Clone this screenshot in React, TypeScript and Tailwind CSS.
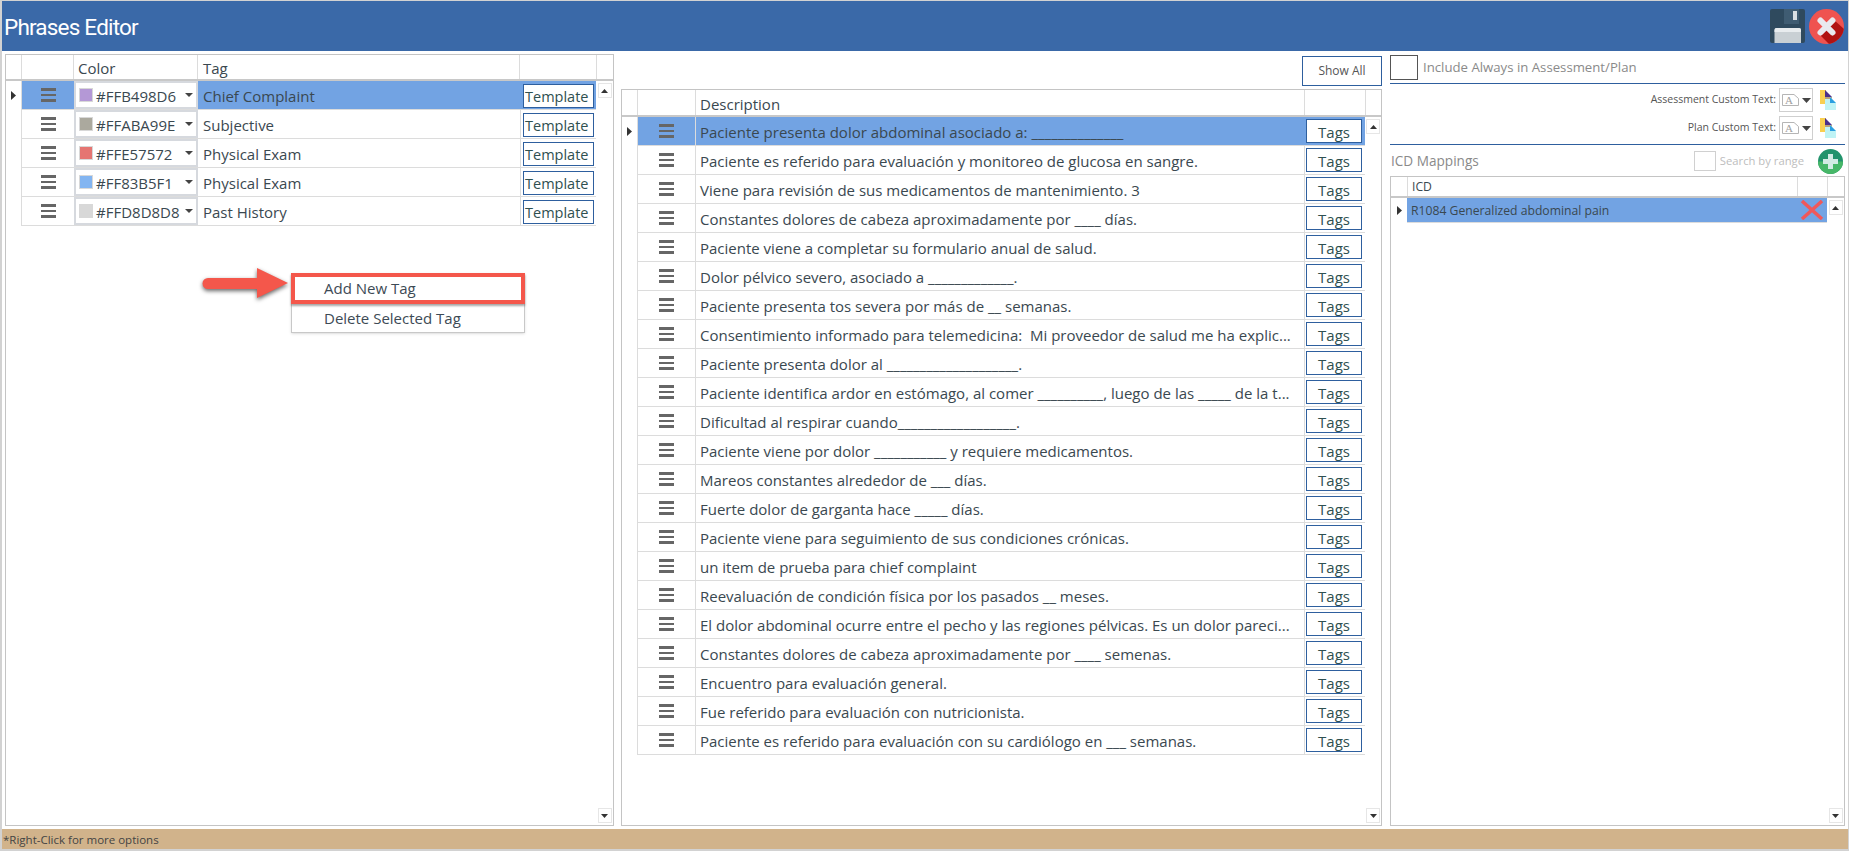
const tags = [
  { color: '#FFB498D6', swatch: '#b498d6', name: 'Chief Complaint' },
  { color: '#FFABA99E', swatch: '#aba99e', name: 'Subjective' },
  { color: '#FFE57572', swatch: '#e57572', name: 'Physical Exam' },
  { color: '#FF83B5F1', swatch: '#83b5f1', name: 'Physical Exam' },
  { color: '#FFD8D8D8', swatch: '#d8d8d8', name: 'Past History' }
]

const phrases = [
  'Paciente presenta dolor abdominal asociado a: ______________',
  'Paciente es referido para evaluación y monitoreo de glucosa en sangre.',
  'Viene para revisión de sus medicamentos de mantenimiento. 3',
  'Constantes dolores de cabeza aproximadamente por ____ días.',
  'Paciente viene a completar su formulario anual de salud.',
  'Dolor pélvico severo, asociado a _____________.',
  'Paciente presenta tos severa por más de __ semanas.',
  'Consentimiento informado para telemedicina:  Mi proveedor de salud me ha explic...',
  'Paciente presenta dolor al ____________________.',
  'Paciente identifica ardor en estómago, al comer __________, luego de las _____ de la t...',
  'Dificultad al respirar cuando__________________.',
  'Paciente viene por dolor ___________ y requiere medicamentos.',
  'Mareos constantes alrededor de ___ días.',
  'Fuerte dolor de garganta hace _____ días.',
  'Paciente viene para seguimiento de sus condiciones crónicas.',
  'un item de prueba para chief complaint',
  'Reevaluación de condición física por los pasados __ meses.',
  'El dolor abdominal ocurre entre el pecho y las regiones pélvicas. Es un dolor pareci...',
  'Constantes dolores de cabeza aproximadamente por ____ semenas.',
  'Encuentro para evaluación general.',
  'Fue referido para evaluación con nutricionista.',
  'Paciente es referido para evaluación con su cardiólogo en ___ semanas.'
]

function Caret() {
  return (
    <svg width="5" height="9" viewBox="0 0 5 9">
      <polygon points="0,0 5,4.5 0,9" fill="#333" />
    </svg>
  )
}

function Handle() {
  return (
    <div className="flex flex-col gap-[3px] w-[15px]">
      <div className="h-[2.5px] bg-[#666]" />
      <div className="h-[2.5px] bg-[#666]" />
      <div className="h-[2.5px] bg-[#666]" />
    </div>
  )
}

function ScrollBtn({ down }: { down?: boolean }) {
  return (
    <div className="w-[14px] h-[15px] border border-[#e6e6e6] bg-white flex items-center justify-center">
      <svg width="7" height="4" viewBox="0 0 7 4">
        <polygon points={down ? '0,0 7,0 3.5,4' : '0,4 7,4 3.5,0'} fill="#333" />
      </svg>
    </div>
  )
}

function SaveIcon() {
  return (
    <svg width="35" height="34" viewBox="0 0 35 34">
      <rect width="35" height="34" rx="2" fill="#2f4a5e" />
      <rect x="14" width="15" height="15" fill="#3f5c72" />
      <rect x="23" y="2" width="4" height="9" fill="#d9dfe3" />
      <path d="M4.5 21a2 2 0 0 1 2-2H29a2 2 0 0 1 2 2v13H4.5z" fill="#c9d0d4" />
      <path d="M4.5 21a2 2 0 0 1 2-2H29a2 2 0 0 1 2 2v2H4.5z" fill="#e8ecee" />
    </svg>
  )
}

function CloseIcon() {
  return (
    <svg width="35" height="35" viewBox="0 0 35 35">
      <defs>
        <clipPath id="close-clip">
          <circle cx="17.5" cy="17.5" r="17.5" />
        </clipPath>
      </defs>
      <circle cx="17.5" cy="17.5" r="17.5" fill="#ef5350" />
      <polygon points="24,10 36,21 36,36 21,36 10,25" fill="#b11212" clipPath="url(#close-clip)" />
      <path d="M11.5 11.5 L23.5 23.5 M23.5 11.5 L11.5 23.5" stroke="#e9e9ef" strokeWidth="6" strokeLinecap="round" />
    </svg>
  )
}

function PlusIcon() {
  return (
    <svg width="25" height="25" viewBox="0 0 25 25">
      <defs>
        <clipPath id="plus-clip">
          <circle cx="12.5" cy="12.5" r="12.5" />
        </clipPath>
      </defs>
      <circle cx="12.5" cy="12.5" r="12.5" fill="#22936c" />
      <rect y="12.5" width="25" height="13" fill="#47b768" clipPath="url(#plus-clip)" />
      <path d="M10 5h5v5h5v5h-5v5h-5v-5H5v-5h5z" fill="#d3ebe3" />
    </svg>
  )
}

function FontBox() {
  return (
    <div className="w-[34px] h-[24px] border border-[#cfcfcf] flex items-center gap-[3px] pl-0.5">
      <svg width="17" height="12" viewBox="0 0 17 12">
        <path d="M0.5 0.5H12L16.5 4.5V11.5H0.5z" fill="white" stroke="#b5b5b5" />
        <text x="7" y="10" fontSize="11" textAnchor="middle" fill="#a0a0a0" fontFamily="'Liberation Serif', serif">A</text>
      </svg>
      <svg width="9" height="5" viewBox="0 0 9 5">
        <polygon points="0,0 9,0 4.5,5" fill="#444" />
      </svg>
    </div>
  )
}

function PasteIcon() {
  return (
    <svg width="16" height="20" viewBox="0 0 16 20">
      <rect y="0" width="6" height="14" fill="#f9cf50" />
      <polygon points="5,0 12,7 5,7" fill="#4a2f8a" />
      <rect x="5" y="7" width="7" height="2" fill="#b9a27a" />
      <polygon points="10,7 16,13 16,20 5,20 5,9 10,9" fill="#bff3f5" />
      <polygon points="10,7 16,13 10,13" fill="#2a9fe0" />
    </svg>
  )
}

function Arrow() {
  return (
    <svg
      width="92"
      height="36"
      viewBox="0 0 92 36"
      className="absolute left-[194px] top-[210px] drop-shadow-[0px_2px_2px_rgba(0,0,0,0.6)]"
    >
      <path d="M8 13H57V3L88 18L57 33V24H8a5.5 5.5 0 0 1 0-11z" fill="#f4574b" />
    </svg>
  )
}

function ContextMenu() {
  return (
    <div className="absolute left-[285px] top-[218px] w-[234px] h-[60px] bg-white border border-[#c8c8c8] shadow-sm text-[15px] text-[#3d4a55]">
      <div className="h-[31px] -mx-px -mt-px border-4 border-[#f4574b] shadow-[0_2px_2px_rgba(0,0,0,0.35)] flex items-center pl-[29px]">
        Add New Tag
      </div>
      <div className="h-[29px] flex items-center pl-[32px]">Delete Selected Tag</div>
    </div>
  )
}

function TagsPanel() {
  return (
    <div className="relative w-[609px] h-full border border-[#c4c4c4] flex flex-col text-[15px] text-[#3a4850]">
      <div className="flex h-[26px] border-b-2 border-[#c8c8c8]">
        <div className="w-[15px]" />
        <div className="w-[52px] border-l border-[#dcdcdc]" />
        <div className="w-[124px] border-l border-[#dcdcdc] pl-1 pt-[3px] flex items-center">Color</div>
        <div className="w-[322px] border-l border-[#dcdcdc] pl-[5px] pt-[3px] flex items-center">Tag</div>
        <div className="w-[77px] border-l border-[#dcdcdc]" />
        <div className="flex-1 border-l border-[#dcdcdc]" />
      </div>
      <div className="flex flex-1 min-h-0">
        <div className="w-[590px]">
          {tags.map((tag, i) => (
            <div key={tag.color} className="flex h-[29px]">
              <div className="w-[15px] flex items-center justify-center">{i === 0 && <Caret />}</div>
              <div className={`flex flex-1 border-b border-l border-[#dcdcdc] ${i === 0 ? 'bg-[#72a3e3]' : ''}`}>
                <div className="w-[52px] flex items-center justify-center">
                  <Handle />
                </div>
                <div className="w-[124px] bg-white border-2 border-[#d6d9de] flex items-center pl-[3px]">
                  <div className="w-[14px] h-[14px] border border-[#d8d8d8]" style={{ backgroundColor: tag.swatch }} />
                  <span className="ml-[3px] mt-[3px]">{tag.color}</span>
                  <svg width="8" height="4" viewBox="0 0 8 4" className="ml-auto mr-[3px]">
                    <polygon points="0,0 8,0 4,4" fill="#444" />
                  </svg>
                </div>
                <div className="w-[322px] flex items-center pl-[5px] pt-[3px]">{tag.name}</div>
                <div className={`flex-1 border-l flex items-center pl-0.5 ${i === 0 ? 'border-[#72a3e3]' : 'border-[#dcdcdc]'}`}>
                  <div className="w-[71px] h-[24px] mt-0.5 bg-white border border-[#2e5f9e] pl-px pt-0.5 flex items-center text-[14.5px] text-[#2f5050]">
                    Template
                  </div>
                </div>
              </div>
            </div>
          ))}
        </div>
        <div className="flex-1 flex flex-col justify-between items-center py-0.5">
          <ScrollBtn />
          <ScrollBtn down />
        </div>
      </div>
      <Arrow />
      <ContextMenu />
    </div>
  )
}

function PhrasesPanel() {
  return (
    <div className="w-[761px] h-full ml-[7px] flex flex-col">
      <div className="h-[35px] flex justify-end pt-0.5">
        <button className="w-[80px] h-[30px] bg-white border border-[#2e5f9e] text-[12px] text-[#555]">Show All</button>
      </div>
      <div className="flex-1 min-h-0 border border-[#c4c4c4] flex flex-col text-[15px] text-[#3a4850]">
        <div className="flex h-[27px] border-b-2 border-[#c8c8c8]">
          <div className="w-[15px]" />
          <div className="w-[58px] border-l border-[#dcdcdc]" />
          <div className="w-[609px] border-l border-[#dcdcdc] pl-1 pt-[3px] flex items-center">Description</div>
          <div className="w-[61px] border-l border-[#dcdcdc]" />
          <div className="flex-1 border-l border-[#dcdcdc]" />
        </div>
        <div className="flex flex-1 min-h-0">
          <div className="w-[743px]">
            {phrases.map((text, i) => (
              <div key={text} className="flex h-[29px]">
                <div className="w-[15px] flex items-center justify-center">{i === 0 && <Caret />}</div>
                <div className={`flex flex-1 border-b border-[#dcdcdc] ${i === 0 ? 'bg-[#72a3e3]' : ''}`}>
                  <div className="w-[58px] border-l border-[#dcdcdc] flex items-center justify-center">
                    <Handle />
                  </div>
                  <div className="w-[609px] border-l border-[#dcdcdc] pl-1 pt-0.5 flex items-center whitespace-pre">{text}</div>
                  <div className={`flex-1 border-l flex items-center pl-px ${i === 0 ? 'border-[#72a3e3]' : 'border-[#dcdcdc]'}`}>
                    <div className="w-[56px] h-[24px] bg-white border border-[#2e5f9e] pt-0.5 flex items-center justify-center text-[#2f5050]">
                      Tags
                    </div>
                  </div>
                </div>
              </div>
            ))}
          </div>
          <div className="flex-1 flex flex-col justify-between items-center py-0.5">
            <ScrollBtn />
            <ScrollBtn down />
          </div>
        </div>
      </div>
    </div>
  )
}

function CustomTextRow({ label }: { label: string }) {
  return (
    <div className="flex items-center justify-end h-[24px] pr-[9px] text-[10.5px] text-[#555]">
      <span>{label}</span>
      <div className="ml-[3px]">
        <FontBox />
      </div>
      <div className="ml-[7px]">
        <PasteIcon />
      </div>
    </div>
  )
}

function IcdPanel() {
  return (
    <div className="w-[455px] h-full ml-2 flex flex-col">
      <div className="h-[30px] flex items-start border-b border-[#2e5f9e]">
        <div className="w-[28px] h-[25px] mt-px border border-[#555]" />
        <span className="ml-[5px] mt-1 text-[13.2px] text-[#8a8a8a]">Include Always in Assessment/Plan</span>
      </div>
      <div className="h-[61px] pt-1 flex flex-col gap-1 border-b border-[#2e5f9e]">
        <CustomTextRow label="Assessment Custom Text:" />
        <CustomTextRow label="Plan Custom Text:" />
      </div>
      <div className="h-[31px] flex items-center pl-px pr-0.5 pt-px">
        <span className="text-[13.6px] text-[#8a8a8a]">ICD Mappings</span>
        <div className="w-[22px] h-[20px] ml-auto border border-[#d0d0d0]" />
        <span className="ml-1 text-[11.25px] text-[#bdbdbd]">Search by range</span>
        <div className="ml-[14px]">
          <PlusIcon />
        </div>
      </div>
      <div className="flex-1 min-h-0 border border-[#c4c4c4] flex flex-col text-[12.2px] text-[#3a4850]">
        <div className="flex h-[21px] border-b-2 border-[#c8c8c8]">
          <div className="w-4" />
          <div className="w-[390px] border-l border-[#dcdcdc] pl-1 pt-0.5 flex items-center">ICD</div>
          <div className="w-[30px] border-l border-[#dcdcdc]" />
          <div className="flex-1 border-l border-[#dcdcdc]" />
        </div>
        <div className="flex flex-1 min-h-0">
          <div className="w-[436px] flex h-[25px]">
            <div className="w-4 flex items-center justify-center">
              <Caret />
            </div>
            <div className="flex-1 bg-[#72a3e3] border-b border-[#dcdcdc] flex items-center pl-1">
              <span className="mt-0.5">R1084 Generalized abdominal pain</span>
              <svg width="24" height="20" viewBox="0 0 24 20" className="ml-auto mr-[3px]">
                <path d="M2 1L22 19M22 1L2 19" stroke="#f0585a" strokeWidth="3.5" />
              </svg>
            </div>
          </div>
          <div className="flex-1 flex flex-col justify-between items-center py-0.5">
            <ScrollBtn />
            <ScrollBtn down />
          </div>
        </div>
      </div>
    </div>
  )
}

export default function App() {
  return (
    <div className="w-[1849px] h-[851px] bg-[#d2d2d2] pt-px pl-0.5 pr-px pb-0.5 flex flex-col font-['Open_Sans','Noto_Sans',sans-serif]">
      <div className="h-[50px] bg-[#3a69a8] flex items-center pl-0.5 pr-1">
        <h1 className="pt-[3px] font-['Roboto',sans-serif] text-[22.5px] tracking-[-0.8px] text-white">Phrases Editor</h1>
        <div className="ml-auto flex items-center gap-1">
          <SaveIcon />
          <CloseIcon />
        </div>
      </div>
      <div className="flex-1 min-h-0 bg-white flex p-[3px]">
        <TagsPanel />
        <PhrasesPanel />
        <IcdPanel />
      </div>
      <div className="h-5 bg-[#d1b38b] flex items-center pl-px pt-px text-[11.5px] text-[#444]">*Right-Click for more options</div>
    </div>
  )
}
